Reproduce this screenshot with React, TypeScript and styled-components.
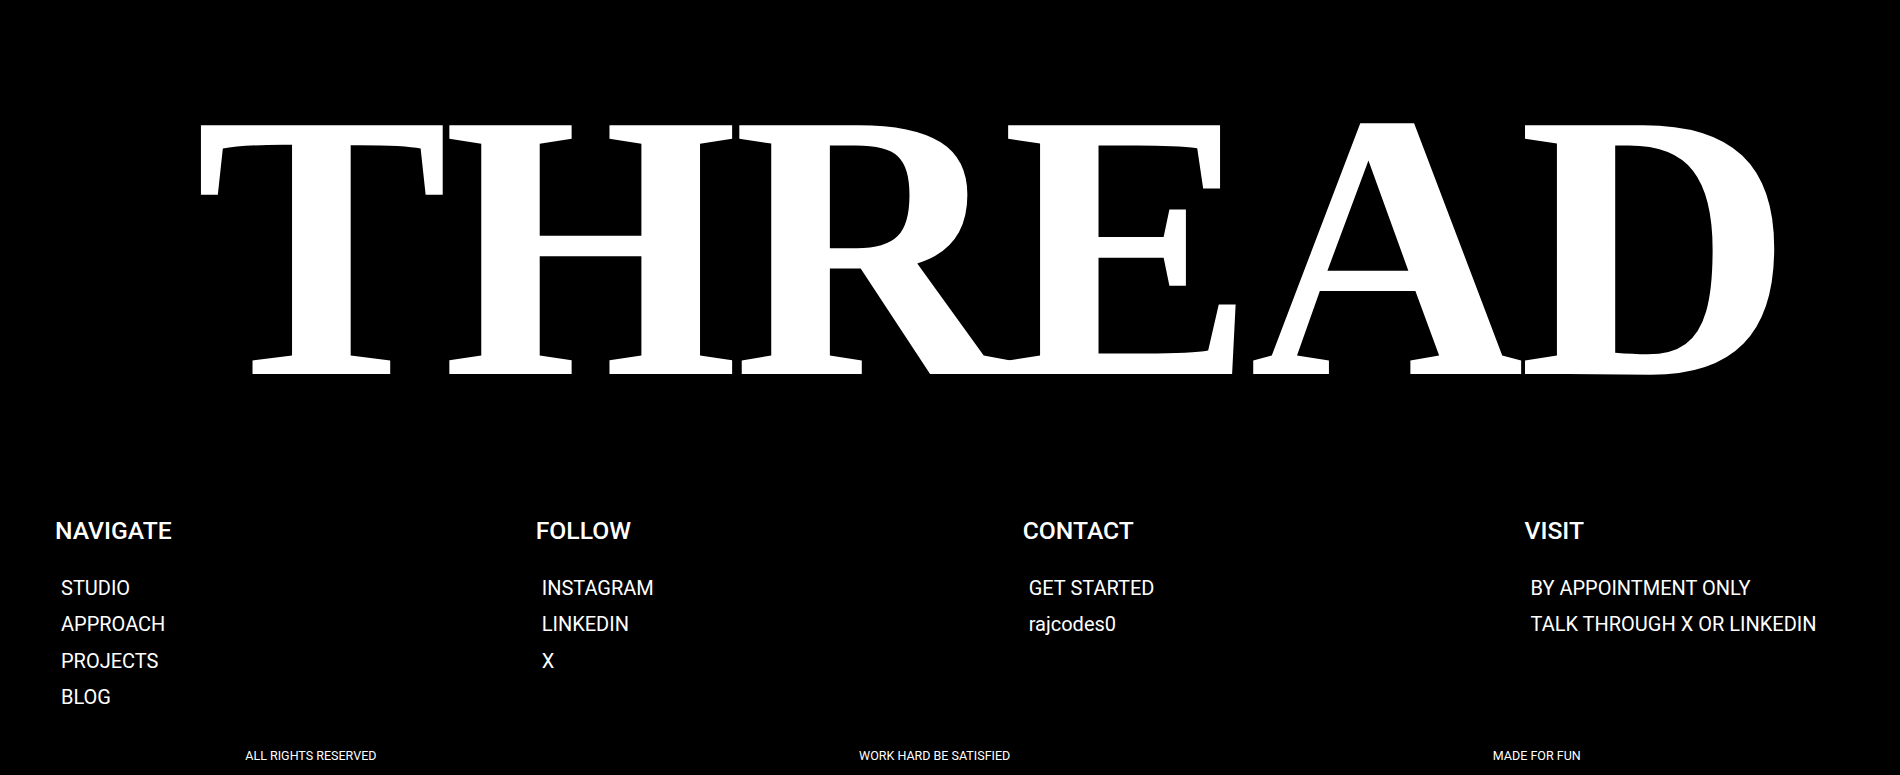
import React from "react";
import styled, { createGlobalStyle } from "styled-components";

const GlobalStyle = createGlobalStyle`
  html, body {
    margin: 0;
    padding: 0;
    background: #000;
  }
  * { box-sizing: border-box; }
`;

const Page = styled.div`
  background: #000;
  color: #fff;
  min-height: 775px;
  font-family: Roboto, "Liberation Sans", sans-serif;
  overflow: hidden;
`;

const Hero = styled.section`
  display: flex;
  padding: 56px 0 0 195px;
`;

const Wordmark = styled.h1`
  margin: 0;
  font-family: "Liberation Serif", "Times New Roman", serif;
  font-weight: 700;
  font-size: 380px;
  line-height: 1;
  letter-spacing: -5.6px;
  color: #fff;
  white-space: nowrap;
`;

const Columns = styled.div`
  display: grid;
  grid-template-columns: 480.7px 487px 501.8px 1fr;
  align-items: start;
  margin-top: 81px;
  padding: 0 0 0 55px;
`;

const Column = styled.div`
  display: flex;
  flex-direction: column;
`;

const Heading = styled.h3`
  margin: 0;
  font-size: 24.7px;
  font-weight: 500;
  line-height: 28px;
  color: #fff;
`;

const LinkList = styled.ul`
  list-style: none;
  margin: 25px 0 0;
  padding: 0;
`;

const LinkItem = styled.li`
  font-size: 20px;
  font-weight: 400;
  line-height: 36.4px;
  padding-left: 6px;
  color: #fff;
  white-space: nowrap;
`;

const BottomBar = styled.div`
  display: flex;
  justify-content: space-around;
  margin-top: 32px;
  padding: 0 78px 0 4px;
`;

const Small = styled.span`
  font-size: 12.5px;
  line-height: 15px;
  color: #fff;
  white-space: nowrap;
`;

const columns = [
  { title: "NAVIGATE", items: ["STUDIO", "APPROACH", "PROJECTS", "BLOG"] },
  { title: "FOLLOW", items: ["INSTAGRAM", "LINKEDIN", "X"] },
  { title: "CONTACT", items: ["GET STARTED", "rajcodes0"] },
  { title: "VISIT", items: ["BY APPOINTMENT ONLY", "TALK THROUGH X OR LINKEDIN"] },
];

export default function App() {
  return (
    <>
      <GlobalStyle />
      <Page>
        <Hero>
          <Wordmark>THREAD</Wordmark>
        </Hero>
        <Columns>
          {columns.map((c) => (
            <Column key={c.title}>
              <Heading>{c.title}</Heading>
              <LinkList>
                {c.items.map((i) => (
                  <LinkItem key={i}>{i}</LinkItem>
                ))}
              </LinkList>
            </Column>
          ))}
        </Columns>
        <BottomBar>
          <Small>ALL RIGHTS RESERVED</Small>
          <Small>WORK HARD BE SATISFIED</Small>
          <Small>MADE FOR FUN</Small>
        </BottomBar>
      </Page>
    </>
  );
}
